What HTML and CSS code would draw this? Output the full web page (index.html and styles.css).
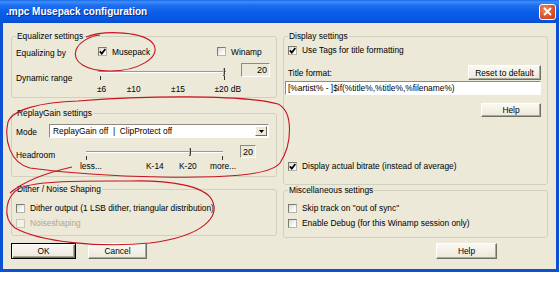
FILE: index.html
```html
<!DOCTYPE html>
<html>

<head>
    <title>.mpc Musepack configuration</title>
    <link rel="stylesheet" href="styles.css">
</head>

<body>
    <div class="window">
        <!-- Title bar -->
        <div class="titlebar">
            <span class="title">.mpc Musepack configuration</span>
            <span class="close">
                <svg width="9" height="9" viewBox="0 0 9 9"><path d="M1 1 L8 8 M8 1 L1 8" stroke="#fff" stroke-width="1.8" /></svg>
            </span>
        </div>

        <div class="client">
            <div class="columns">
                <div class="column">
                    <!-- Equalizer -->
                    <fieldset class="group eq">
                        <legend>Equalizer settings</legend>
                        <div class="row eq-by">
                            <span class="label">Equalizing by</span>
                            <label class="check musepack">
                                <span class="box"><svg width="7" height="7" viewBox="0 0 7 7"><path d="M0.8 3.4 L2.8 5.6 L6.4 1" fill="none" stroke="#000" stroke-width="1.7" /></svg></span>Musepack
                            </label>
                            <label class="check"><span class="box"></span>Winamp</label>
                        </div>
                        <div class="row eq-range">
                            <span class="label">Dynamic range</span>
                            <div class="slider dyn">
                                <div class="track"><span class="thumb"></span></div>
                                <div class="ticks"><i></i><i></i></div>
                                <div class="marks">
                                    <span class="w30">±6</span>
                                    <span class="w45">±10</span>
                                    <span class="w44">±15</span>
                                    <span>±20 dB</span>
                                </div>
                            </div>
                            <span class="edit num wide">20</span>
                        </div>
                    </fieldset>

                    <!-- ReplayGain -->
                    <fieldset class="group replay">
                        <legend>ReplayGain settings</legend>
                        <div class="row mode">
                            <span class="label">Mode</span>
                            <div class="combo">
                                <span class="combo-text">ReplayGain off &nbsp;|&nbsp; ClipProtect off</span>
                                <span class="combo-btn"><svg width="5" height="3" viewBox="0 0 5 3"><path d="M0 0 H5 L2.5 3 Z" fill="#000" /></svg></span>
                            </div>
                        </div>
                        <div class="row headroom">
                            <span class="label">Headroom</span>
                            <div class="slider head">
                                <div class="track"><span class="thumb"></span></div>
                                <div class="ticks"><i></i><i></i></div>
                                <div class="marks">
                                    <span class="w66">less...</span>
                                    <span class="w33">K-14</span>
                                    <span class="w31">K-20</span>
                                    <span>more...</span>
                                </div>
                            </div>
                            <span class="edit num small">20</span>
                        </div>
                    </fieldset>

                    <!-- Dither -->
                    <fieldset class="group dither">
                        <legend>Dither / Noise Shaping</legend>
                        <label class="row check first"><span class="box"></span>Dither output (1 LSB dither, triangular distribution)</label>
                        <label class="row check disabled"><span class="box"></span>Noiseshaping</label>
                    </fieldset>
                </div>

                <div class="column">
                    <!-- Display -->
                    <fieldset class="group display">
                        <legend>Display settings</legend>
                        <label class="row check tags">
                            <span class="box"><svg width="7" height="7" viewBox="0 0 7 7"><path d="M0.8 3.4 L2.8 5.6 L6.4 1" fill="none" stroke="#000" stroke-width="1.7" /></svg></span>Use Tags for title formatting
                        </label>
                        <div class="row format">
                            <span>Title format:</span>
                            <span class="btn reset">Reset to default</span>
                        </div>
                        <div class="edit title-edit">[%artist% - ]$if(%title%,%title%,%filename%)</div>
                        <div class="row help-row"><span class="btn help-small">Help</span></div>
                        <label class="row check bitrate">
                            <span class="box"><svg width="7" height="7" viewBox="0 0 7 7"><path d="M0.8 3.4 L2.8 5.6 L6.4 1" fill="none" stroke="#000" stroke-width="1.7" /></svg></span>Display actual bitrate (instead of average)
                        </label>
                    </fieldset>

                    <!-- Misc -->
                    <fieldset class="group misc">
                        <legend>Miscellaneous settings</legend>
                        <label class="row check first"><span class="box"></span>Skip track on "out of sync"</label>
                        <label class="row check"><span class="box"></span>Enable Debug (for this Winamp session only)</label>
                    </fieldset>
                </div>
            </div>

            <div class="buttons">
                <span class="btn default ok">OK</span>
                <span class="btn cancel">Cancel</span>
                <span class="btn help">Help</span>
            </div>
        </div>
    </div>

    <!-- red pen marks on the screenshot -->
    <svg class="marks-overlay" width="559" height="307" viewBox="0 0 559 307">
        <g fill="none" stroke="#c8141e" stroke-width="1.1">
            <path d="M86 37 C104 30, 146 31, 154 45 C160 58, 138 71, 110 71 C86 71, 72 62, 76 50 C79 42, 90 36, 100 35" />
            <path d="M78 101 C140 96, 240 94, 278 104 C294 112, 292 145, 280 163 C270 176, 220 178, 160 177 C110 176, 60 172, 30 168 C10 163, 4 140, 8 122 C12 110, 40 102, 78 101" />
            <path d="M72 167 C50 172, 25 180, 10 193" />
            <path d="M130 181 C170 180, 205 186, 212 200 C220 216, 205 236, 150 243 C100 248, 40 242, 15 228 C2 218, 5 196, 20 188 C40 180, 90 181, 130 181" />
        </g>
    </svg>
</body>

</html>
```

FILE: styles.css
```css
* {
    box-sizing: border-box;
}

body {
    margin: 0;
    position: relative;
    background: #fff;
    font-family: "Liberation Sans", Arial, sans-serif;
    font-size: 8.4px;
    line-height: 10px;
    color: #000;
}

.window {
    width: 559px;
    height: 272px;
    padding-bottom: 3px;
    background: #0c50d4;
}

.titlebar {
    height: 23px;
    display: flex;
    align-items: center;
    justify-content: space-between;
    padding: 0 3px 0 6px;
    background: linear-gradient(#1a68ea 0, #3d8ff8 2px, #1f6ff0 5px, #0b5fe8 12px, #0757e2 19px, #0a4ccc 23px);
}

.title {
    color: #fff;
    font-size: 10px;
    font-weight: bold;
    text-shadow: 1px 1px #0b2a8c;
}

.close {
    width: 17px;
    height: 16px;
    display: flex;
    align-items: center;
    justify-content: center;
    border: 1px solid #fff;
    border-radius: 3px;
    background: radial-gradient(circle at 35% 30%, #f08a66, #d9512a 60%, #b83a16);
}

.client {
    height: 246px;
    margin: 0 3px;
    padding: 8px 8px 0;
    background: #ece9d8;
}

.columns {
    display: grid;
    grid-template-columns: 266px 265px;
    column-gap: 6px;
    height: 207px;
}

.column {
    display: flex;
    flex-direction: column;
}

/* group boxes */
.group {
    margin: 0;
    padding: 0 4px;
    min-width: 0;
    border: 1px solid #d0d0bf;
    border-radius: 3px;
}

.group legend {
    padding: 0 1px;
    line-height: 10px;
}

.eq {
    height: 67px;
}

.replay {
    height: 69px;
    margin-top: 10px;
}

.dither {
    height: 52px;
    margin-top: 7px;
}

.display {
    height: 154px;
}

.misc {
    height: 53px;
}

.row {
    display: flex;
    align-items: center;
}

.label {
    flex: none;
}

/* checkboxes */
.check {
    display: flex;
    align-items: center;
    gap: 5px;
    white-space: nowrap;
}

.box {
    width: 9px;
    height: 9px;
    flex: none;
    display: flex;
    align-items: center;
    justify-content: center;
    border: 1px solid #8f8f87;
    border-color: #7b7b73 #b5b5ab #b5b5ab #7b7b73;
    background: linear-gradient(135deg, #d8d8cf, #f6f6f2 60%, #fff);
}

.check.disabled {
    color: #aca899;
}

.check.disabled .box {
    border-color: #cac8bb;
    background: #f2f1ea;
}

/* equalizer rows */
.eq-by {
    height: 15px;
    margin-top: 3px;
}

.eq-by .label {
    width: 82px;
    margin-top: 3px;
}

.musepack {
    width: 119px;
}

.eq-range {
    align-items: flex-start;
    height: 36px;
}

.eq-range .label {
    width: 82px;
    margin-top: 14px;
}

/* sliders */
.slider {
    flex: none;
}

.slider.dyn {
    width: 143px;
    padding-top: 12px;
}

.slider.head {
    width: 160px;
    padding-top: 13px;
}

.track {
    position: relative;
    height: 2px;
    border-top: 1px solid #9d9a8a;
    border-bottom: 1px solid #fff;
}

.dyn .track {
    width: 128px;
}

.head .track {
    width: 137px;
    margin-left: 6px;
}

.thumb {
    position: absolute;
    top: -4px;
    width: 2px;
    height: 8px;
    border-right: 1px solid #3c3b36;
    border-bottom: 1px solid #3c3b36;
    border-bottom-right-radius: 2px;
    background: #bdb9a8;
}

.dyn .thumb {
    left: 125px;
}

.head .thumb {
    left: 103px;
}

.ticks {
    display: flex;
    justify-content: space-between;
    height: 4px;
    margin-top: 3px;
}

.ticks i {
    width: 1px;
    height: 4px;
    background: #333;
}

.dyn .ticks {
    width: 128px;
    padding: 0 1px 0 2px;
}

.head .ticks {
    width: 137px;
    margin-left: 6px;
}

.marks {
    display: flex;
    white-space: nowrap;
}

.dyn .marks {
    margin-top: 4px;
    margin-left: -1px;
}

.head .marks {
    margin-top: 1px;
}

.w30 { width: 30px; }
.w31 { width: 31px; }
.w33 { width: 33px; }
.w44 { width: 44px; }
.w45 { width: 45px; }
.w66 { width: 66px; }

/* edit boxes */
.edit {
    display: flex;
    align-items: center;
    height: 14px;
    border: 1px solid;
    border-color: #8d8b80 #fff #fff #8d8b80;
    background: #fff;
    white-space: nowrap;
    overflow: hidden;
}

.num {
    flex: none;
    justify-content: flex-end;
    padding-right: 2px;
    background: #ece9d8;
    font-size: 9px;
}

.num.wide {
    width: 29px;
    margin-top: 4px;
}

.num.small {
    width: 16px;
    height: 13px;
    margin-top: 7px;
}

.title-edit {
    width: 256px;
    margin: 1px 0 0 -3px;
    padding-left: 2px;
}

/* replaygain rows */
.mode {
    height: 14px;
    margin-top: 6px;
}

.mode .label {
    width: 33px;
    margin-top: 2px;
}

.combo {
    width: 220px;
    height: 14px;
    display: flex;
    align-items: center;
    justify-content: space-between;
    border: 1px solid;
    border-color: #8d8b80 #fff #fff #8d8b80;
    background: #fff;
}

.combo-text {
    padding-left: 3px;
    white-space: nowrap;
}

.combo-btn {
    width: 12px;
    height: 10px;
    margin-right: 1px;
    display: flex;
    align-items: center;
    justify-content: center;
    border: 1px solid;
    border-color: #fff #716f64 #716f64 #fff;
    background: #ece9d8;
}

.headroom {
    align-items: flex-start;
    height: 32px;
}

.headroom .label {
    width: 64px;
    margin-top: 12px;
}

/* dither and misc rows */
.dither .row,
.misc .row {
    height: 14px;
    margin-top: 1px;
}

.dither .row.first {
    margin-top: 7px;
}

.misc .row.first {
    margin-top: 6px;
}

/* display settings */
.tags {
    height: 14px;
    margin-top: 2px;
}

.format {
    justify-content: space-between;
    height: 15px;
    margin-top: 8px;
}

.help-row {
    justify-content: flex-end;
    margin-top: 8px;
}

.bitrate {
    height: 14px;
    margin-top: 42px;
}

/* buttons */
.btn {
    display: flex;
    align-items: center;
    justify-content: center;
    height: 16px;
    border: 1px solid;
    border-color: #fff #716f64 #716f64 #fff;
    box-shadow: inset -1px -1px #aca899;
    background: linear-gradient(#f9f8f4, #ece9d8);
    white-space: nowrap;
}

.reset {
    width: 73px;
    height: 15px;
    margin-right: 2px;
}

.help-small {
    width: 60px;
    height: 14px;
    margin-right: 2px;
}

.buttons {
    display: flex;
    height: 16px;
    margin-top: 5px;
}

.btn.default {
    border: 1px solid #000;
    box-shadow: inset 1px 1px #fff, inset -1px -1px #716f64, inset -2px -2px #aca899;
}

.ok {
    width: 65px;
}

.cancel {
    width: 59px;
    margin-left: 12px;
}

.help {
    width: 61px;
    margin-left: auto;
    margin-right: 51px;
}

.marks-overlay {
    position: absolute;
    top: 0;
    left: 0;
    pointer-events: none;
}
```
